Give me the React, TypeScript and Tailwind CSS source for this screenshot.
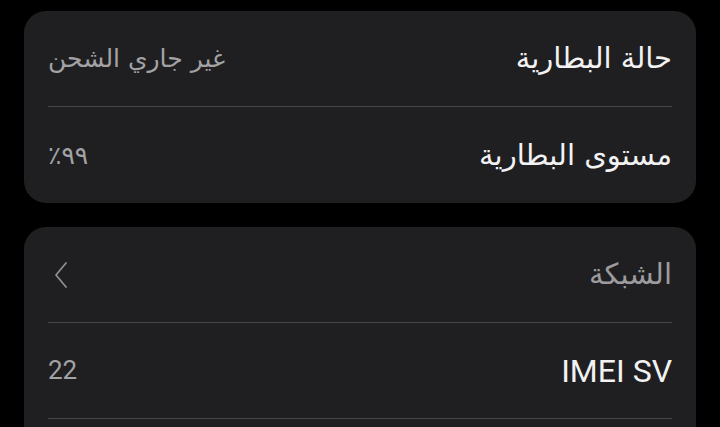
import React from 'react'

// Device info — battery + network rows, dark One UI style
const arabic = { fontFamily: '"DejaVu Sans", "Noto Sans", sans-serif' }

function Row({ label, value, dim }: { label: string; value: React.ReactNode; dim?: boolean }) {
  return (
    <div dir="rtl" className="flex h-[95px] items-center justify-between">
      <span className={`text-[29px] ${dim ? 'text-[#9c9c9e]' : 'text-[#f2f2f2]'}`} style={arabic}>
        {label}
      </span>
      <span className="text-[25px] text-[#a3a3a5]" style={arabic}>
        {value}
      </span>
    </div>
  )
}

function Divider() {
  return <div className="h-px bg-[#48484a]" />
}

export default function App() {
  return (
    <div className="h-[427px] w-[720px] overflow-hidden bg-black pt-[11px]">
      <div className="mx-6 rounded-[22px] bg-[#1f1f21] px-6">
        <Row label="حالة البطارية" value="غير جاري الشحن" />
        <Divider />
        <div className="h-px" />
        <Row label="مستوى البطارية" value="٩٩٪" />
      </div>

      <div className="mx-6 mt-6 rounded-t-[22px] bg-[#1f1f21] px-6 pb-10">
        <Row
          label="الشبكة"
          dim
          value={
            <svg width="18" height="28" viewBox="0 0 18 28" fill="none" className="ml-1">
              <path d="M14 2 L4 14 L14 26" stroke="#8e8e90" strokeWidth="1.8" strokeLinecap="round" strokeLinejoin="round" />
            </svg>
          }
        />
        <Divider />
        <div dir="rtl" className="flex h-[95px] items-center justify-between">
          <span className="text-[32px] text-[#f2f2f2]" style={{ fontFamily: 'Roboto, sans-serif' }}>
            IMEI SV
          </span>
          <span className="text-[26px] text-[#a3a3a5]" style={{ fontFamily: 'Roboto, sans-serif' }}>
            22
          </span>
        </div>
        <Divider />
      </div>
    </div>
  )
}
